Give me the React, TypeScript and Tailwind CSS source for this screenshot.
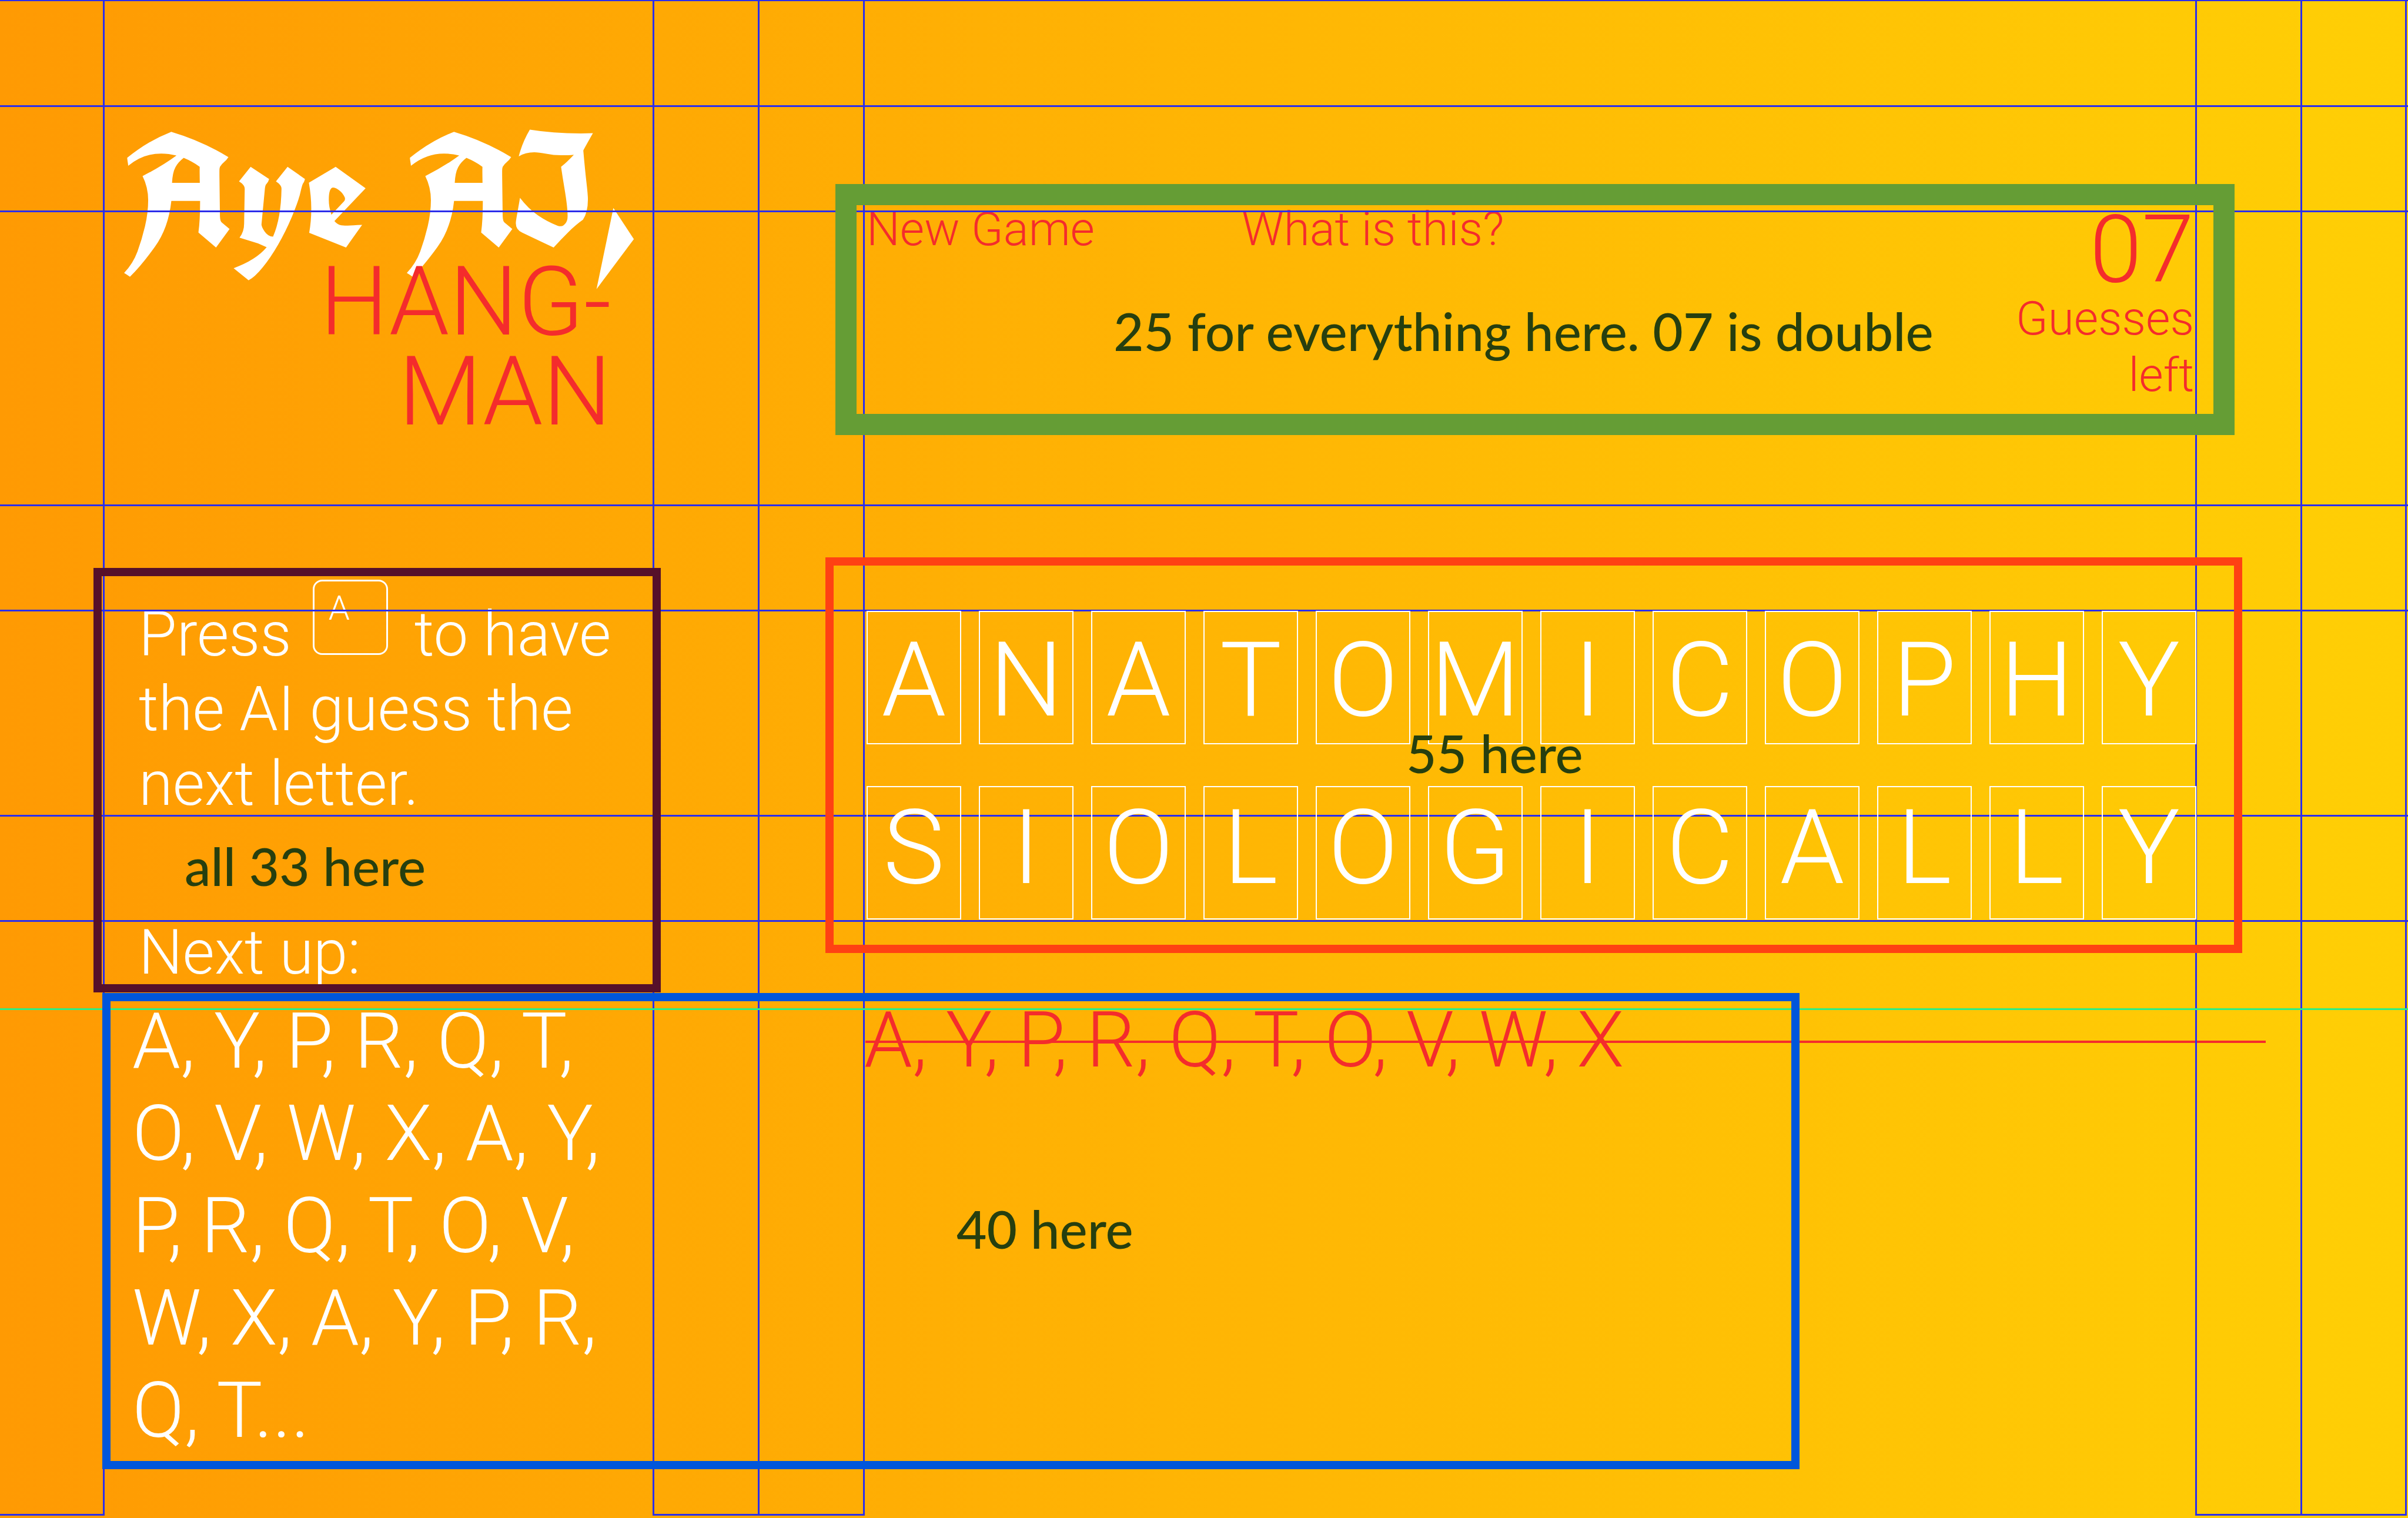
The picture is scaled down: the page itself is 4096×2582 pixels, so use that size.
const WORDS = ["ANATOMICOPHY", "SIOLOGICALLY"];

const QUEUE = ["A, Y, P, R, Q, T,", "O, V, W, X, A, Y,", "P, R, Q, T, O, V,", "W, X, A, Y, P, R,", "Q, T..."];

function Guides() {
  const row = "border-b-3 border-[#2b2eec]";
  const col = "border-r-3 border-b-3 border-[#2b2eec]";
  return (
    <div aria-hidden="true" className="pointer-events-none absolute inset-0 z-10">
      <div className="absolute inset-0 bottom-[4px] grid grid-cols-[178fr_935fr_179fr_179fr_2266fr_179fr_178fr_2fr]">
        <div className={col} />
        <div className="border-r-3 border-[#2b2eec]" />
        <div className={col} />
        <div className={col} />
        <div className="border-r-3 border-[#2b2eec]" />
        <div className={col} />
        <div className={col} />
      </div>
      <div className="absolute inset-0 grid grid-rows-[2px_180px_179px_500px_179px_349px_179px_150px_1fr]">
        <div className="bg-[#2b2eec]" />
        <div className={row} />
        <div className={row} />
        <div className={row} />
        <div className={row} />
        <div className={row} />
        <div className={row} />
        <div className="border-b-3 border-[#2bee84]" />
      </div>
    </div>
  );
}

function Note({ className, children }: { className: string; children: string }) {
  return (
    <p className={"pointer-events-none absolute z-40 whitespace-nowrap font-['Lato'] text-[89px] leading-[96px] font-medium text-[#263f0f] " + className}>
      {children}
    </p>
  );
}

function Frame({ className }: { className: string }) {
  return <div aria-hidden="true" className={"pointer-events-none absolute z-30 " + className} />;
}

function Sidebar() {
  return (
    <aside className="col-start-2 flex flex-col pt-[212px] text-white">
      <h1>
        <span className="block pl-[32px] font-['UnifrakturCook','Old_English_Text_MT','Liberation_Serif',serif] text-[268px] leading-[225px] font-bold whitespace-nowrap">
          Aye AI,
        </span>
        <span className="block pr-[72px] text-right text-[164px] leading-[153px] text-[#f42c2c]">
          HANG-
          <br />
          MAN
        </span>
      </h1>

      <section className="relative mt-[273px] pl-[59px] text-[105px] leading-[127px] whitespace-nowrap">
        <Frame className="-top-[50px] -right-[12px] -bottom-[4px] -left-[18px] border-14 border-[#56102a]" />
        <p>
          <span className="flex h-[127px] items-start">
            Press
            <kbd className="-mt-[30px] mr-[45px] ml-[36px] size-[128px] rounded-2xl border-3 border-white pt-[16px] pl-[24px] font-['Roboto'] text-[58px] leading-[58px]">
              A
            </kbd>
            to have
          </span>
          the AI guess the
          <br />
          next letter.
        </p>
        <h2 className="mt-[160px]">Next up:</h2>
        <Note className="top-[409px] left-[137px]">all 33 here</Note>
      </section>

      <p className="mt-[9px] pl-[48px] text-[131px] leading-[157px] whitespace-nowrap">
        {QUEUE.map((line) => (
          <span key={line} className="block">
            {line}
          </span>
        ))}
      </p>
    </aside>
  );
}

function Header() {
  return (
    <header className="relative flex items-start justify-between text-[80px] leading-[96px] text-[#f42c2c]">
      <Frame className="-top-[29px] -right-[65px] -bottom-[54px] -left-[49px] border-36 border-[#659d35]" />
      <nav className="flex gap-[250px] pl-[4px]">
        <button type="button">New Game</button>
        <a href="#about">What is this?</a>
      </nav>
      <div className="pt-[14px] pr-[4px] text-right">
        <p className="text-[160px] leading-[138px]">07</p>
        <p>
          Guesses
          <br />
          left
        </p>
      </div>
      <Note className="top-[173px] left-[424px]">25 for everything here. 07 is double</Note>
    </header>
  );
}

function Board() {
  return (
    <section className="relative mt-[353px]">
      <Frame className="-top-[91px] -right-[78px] -bottom-[57px] -left-[66px] border-14 border-[#ff4113]" />
      <div className="relative z-20 flex flex-col gap-[71px] pl-[4px] text-[176px] text-white">
        {WORDS.map((word, r) => (
          <div key={word} className={"grid grid-cols-12 gap-[30px] " + (r === 0 ? "leading-[232px]" : "leading-[206px]")}>
            {word.split("").map((letter, i) => (
              <div key={i} className="h-[227px] border-2 border-white text-center">
                {letter}
              </div>
            ))}
          </div>
        ))}
      </div>
      <Note className="top-[194px] left-[922px]">55 here</Note>
    </section>
  );
}

export default function App() {
  return (
    <div className="relative grid min-h-screen grid-cols-[177fr_935fr_358fr_2266fr_360fr] overflow-hidden bg-linear-to-r from-[#ff9a03] to-[#ffcf05] font-['Roboto',sans-serif] font-light">
      <Guides />
      <Sidebar />
      <main className="col-start-4 flex flex-col pt-[342px]">
        <Header />
        <Board />
        <section className="relative mt-[127px] text-[131px] leading-[157px] whitespace-nowrap text-[#f42c2c]">
          <p>A, Y, P, R, Q, T, O, V, W, X</p>
          <div aria-hidden="true" className="absolute top-[79px] -right-[118px] left-[2px] h-[4px] bg-[#f42c2c]" />
          <Note className="top-[351px] left-[157px]">40 here</Note>
        </section>
      </main>
      <div className="pointer-events-none absolute inset-x-0 top-[1689px] z-30 grid h-[810px] grid-cols-[174fr_2887fr_1035fr]">
        <div className="col-start-2 border-14 border-[#0056db]" />
      </div>
    </div>
  );
}
